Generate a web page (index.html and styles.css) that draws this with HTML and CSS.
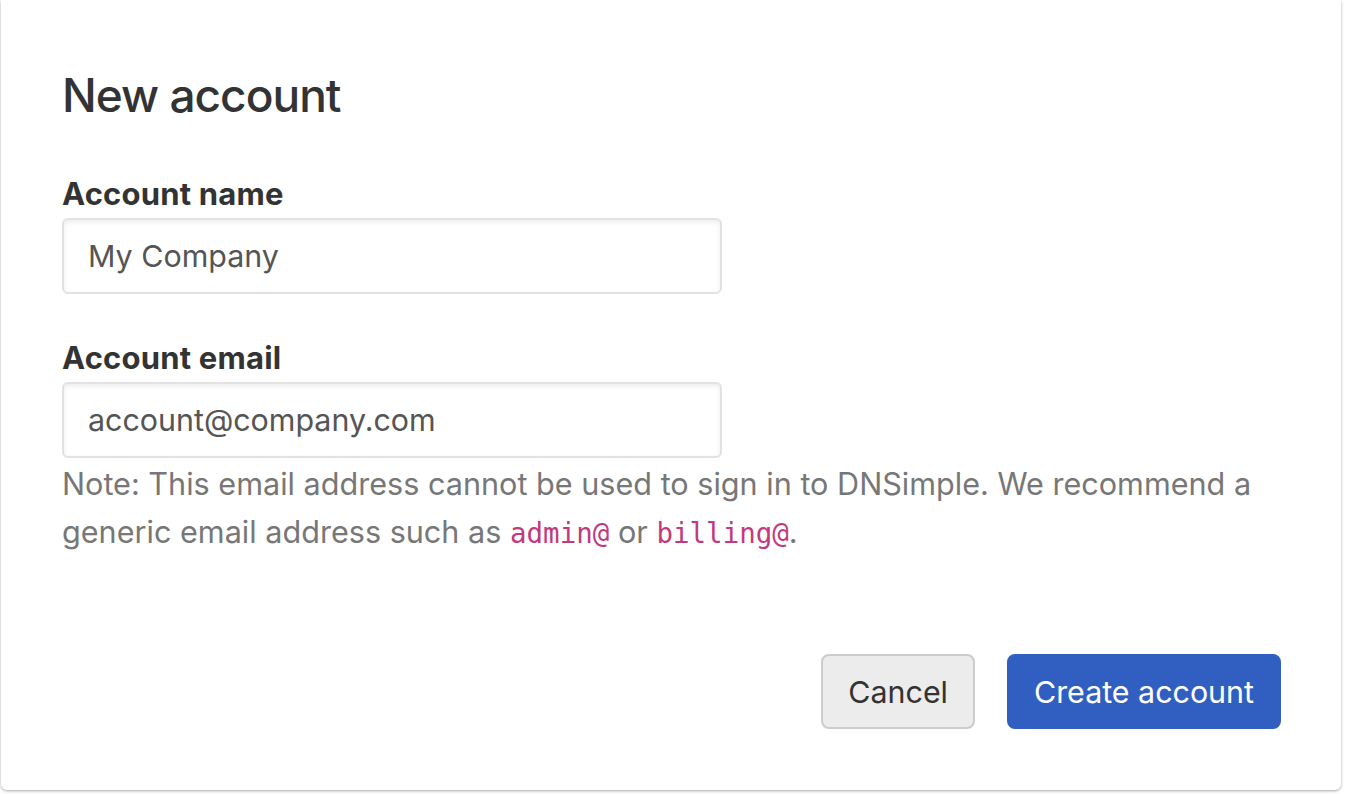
FILE: index.html
```html
<!DOCTYPE html>
<html>
<head>
<meta charset="utf-8">
<link rel="stylesheet" href="styles.css">
</head>
<body>
<div class="page">
  <div class="card">
    <h1 class="title">New account</h1>
    <div class="field field-name">
      <label class="label">Account name</label>
      <input class="input" type="text" value="My Company">
    </div>
    <div class="field field-email">
      <label class="label">Account email</label>
      <input class="input" type="text" value="account@company.com">
      <p class="note">Note: This email address cannot be used to sign in to DNSimple. We recommend a generic email address such as <code class="code">admin@</code> or <code class="code">billing@</code>.</p>
    </div>
    <div class="actions">
      <button class="btn btn-cancel">Cancel</button>
      <button class="btn btn-primary">Create account</button>
    </div>
  </div>
</div>
</body>
</html>
```

FILE: styles.css
```css
html, body {
  margin: 0;
  padding: 0;
  background: #ffffff;
}
body {
  font-family: Inter, "Open Sans", "Liberation Sans", sans-serif;
  color: #333333;
}
.page {
  padding: 0 7px 4px 1px;
}
.card {
  background: #ffffff;
  border-radius: 0 0 6px 6px;
  box-shadow: 0 1px 3px rgba(0,0,0,0.35);
  padding: 67px 60px 61px 61px;
  height: 790px;
  box-sizing: border-box;
  display: flex;
  flex-direction: column;
}
.title {
  margin: 0 0 53px;
  font-size: 46px;
  line-height: 56px;
  font-weight: 500;
  letter-spacing: -1px;
  color: #333333;
}
.field {
  display: flex;
  flex-direction: column;
  align-items: flex-start;
}
.field-name {
  margin-bottom: 46px;
}
.label {
  font-size: 31px;
  line-height: 36px;
  font-weight: 700;
  letter-spacing: 0.2px;
  color: #333333;
  margin-bottom: 6px;
}
.input {
  width: 660px;
  height: 76px;
  box-sizing: border-box;
  border: 2px solid #e2e2e2;
  border-radius: 6px;
  box-shadow: inset 0 2px 5px rgba(0,0,0,0.08);
  padding: 0 24px;
  font-family: Inter, "Open Sans", "Liberation Sans", sans-serif;
  font-size: 30.4px;
  color: #555555;
  outline: none;
}
.note {
  margin: 2px 0 0;
  font-size: 30.6px;
  line-height: 48px;
  color: #777777;
}
.code {
  font-family: "DejaVu Sans Mono", "Liberation Mono", monospace;
  font-size: 27.5px;
  line-height: 1;
  color: #c23a7e;
}
.actions {
  margin-top: auto;
  display: flex;
  justify-content: flex-end;
  gap: 32px;
}
.btn {
  height: 75px;
  box-sizing: border-box;
  border-radius: 8px;
  font-family: Inter, "Open Sans", "Liberation Sans", sans-serif;
  font-size: 30.4px;
  padding: 0 25px;
  cursor: pointer;
}
.btn-cancel {
  background: #ececec;
  border: 2px solid #cccccc;
  color: #333333;
}
.btn-primary {
  background: #305fc1;
  border: 2px solid #305fc1;
  color: #ffffff;
}
```
